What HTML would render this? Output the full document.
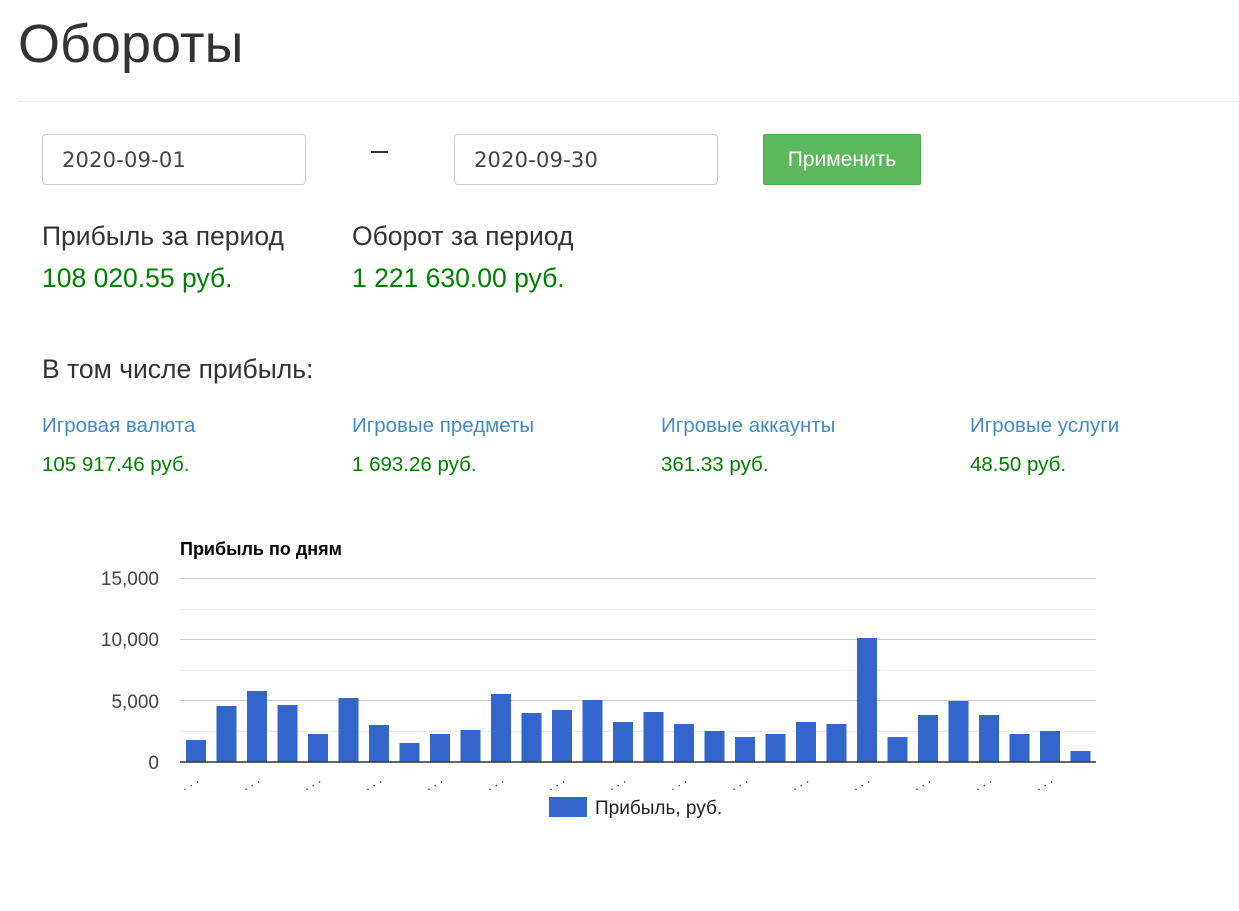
<!DOCTYPE html>
<html><head><meta charset="utf-8"><style>
body{margin:0;background:#fff;font-family:"Liberation Sans",sans-serif;color:#333;width:1239px;height:911px;position:relative;overflow:hidden}
.a{position:absolute;white-space:nowrap}
.inp{position:absolute;top:134px;height:48px;width:261px;border:1px solid #ccc;border-radius:4px;font-family:"DejaVu Sans",sans-serif;font-size:21px;color:#444;line-height:51px;padding-left:19px;box-sizing:border-box;letter-spacing:0.2px}
.g{color:#008000}
.l{color:#428bca}
</style></head><body>
<div class="a" style="left:18px;top:13px;font-size:54px;line-height:62px">Обороты</div>
<div class="a" style="left:18px;top:101px;width:1221px;height:1px;background:#eee"></div>
<div class="inp" style="left:42px;width:264px;height:51px">2020-09-01</div>
<div class="a" style="left:371px;top:151px;width:17px;height:2px;background:#333"></div>
<div class="inp" style="left:454px;width:264px;height:51px">2020-09-30</div>
<div class="a" style="left:763px;top:134px;width:158px;height:51px;background:#5cb85c;border:1px solid #4cae4c;box-sizing:border-box;border-radius:2px;color:#fff;font-size:21px;line-height:49px;text-align:center">Применить</div>
<div class="a" style="left:42px;top:221px;font-size:26.5px">Прибыль за период</div>
<div class="a" style="left:352px;top:221px;font-size:26.5px">Оборот за период</div>
<div class="a g" style="left:42px;top:263px;font-size:26.5px">108 020.55 руб.</div>
<div class="a g" style="left:352px;top:263px;font-size:26.5px">1 221 630.00 руб.</div>
<div class="a" style="left:42px;top:354px;font-size:26.5px">В том числе прибыль:</div>
<div class="a l" style="left:42px;top:414px;font-size:20.5px">Игровая валюта</div>
<div class="a l" style="left:352px;top:414px;font-size:20.5px">Игровые предметы</div>
<div class="a l" style="left:661px;top:414px;font-size:20.5px">Игровые аккаунты</div>
<div class="a l" style="left:970px;top:414px;font-size:20.5px">Игровые услуги</div>
<div class="a g" style="left:42px;top:453px;font-size:20.5px">105 917.46 руб.</div>
<div class="a g" style="left:352px;top:453px;font-size:20.5px">1 693.26 руб.</div>
<div class="a g" style="left:661px;top:453px;font-size:20.5px">361.33 руб.</div>
<div class="a g" style="left:970px;top:453px;font-size:20.5px">48.50 руб.</div>
<svg class="a" style="left:0;top:0" width="1239" height="911">
<text x="180" y="555" font-family="Liberation Sans" font-weight="bold" font-size="18" fill="#000">Прибыль по дням</text>
<g stroke="#ebebeb" stroke-width="1"><line x1="180" x2="1096" y1="609.5" y2="609.5"/><line x1="180" x2="1096" y1="670.5" y2="670.5"/><line x1="180" x2="1096" y1="731.5" y2="731.5"/></g>
<g stroke="#ccc" stroke-width="1"><line x1="180" x2="1096" y1="578.5" y2="578.5"/><line x1="180" x2="1096" y1="639.5" y2="639.5"/><line x1="180" x2="1096" y1="700.5" y2="700.5"/></g>
<g font-family="Liberation Sans" font-size="19" fill="#444" text-anchor="end">
<text x="159" y="585">15,000</text><text x="159" y="646">10,000</text><text x="159" y="708">5,000</text><text x="159" y="769">0</text></g>
<g fill="#3366cc" id="bars"></g>
<line x1="180" x2="1096" y1="762" y2="762" stroke="#333" stroke-width="1.5"/>
<g id="ticks" font-family="Liberation Sans" font-size="13" fill="#222"></g>
<rect x="549" y="797" width="38" height="20" fill="#3366cc"/>
<text x="595" y="814" font-family="Liberation Sans" font-size="19" fill="#222">Прибыль, руб.</text>
</svg>
<script>
var t=[740,706,691,705,734,698,725,743,734,730,694,713,710,700,722,712,724,731,737,734,722,724,638,737,715,701,715,734,731,751];
var b=document.getElementById('bars'),k=document.getElementById('ticks'),ns='http://www.w3.org/2000/svg';
for(var i=0;i<30;i++){var r=document.createElementNS(ns,'rect');var x=186+i*30.5;r.setAttribute('x',x);r.setAttribute('y',t[i]);r.setAttribute('width',20);r.setAttribute('height',762-t[i]);b.appendChild(r);
if(i%2==0){var s=document.createElementNS(ns,'text');s.setAttribute('x',x-4);s.setAttribute('y',788);s.textContent='. . .';s.setAttribute('transform','rotate(-30 '+(x+2)+' 786)');k.appendChild(s);}}
</script>
</body></html>
